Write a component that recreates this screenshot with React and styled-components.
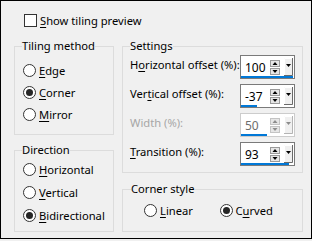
import React from "react";
import styled, { createGlobalStyle } from "styled-components";

const GlobalStyle = createGlobalStyle`
  html, body {
    margin: 0;
    padding: 0;
    background: #f0f0f0;
  }
  body {
    font-family: "Noto Sans", "Open Sans", sans-serif;
    font-size: 11.2px;
  }
`;

const SETTINGS = [
  { label: "Horizontal offset (%):", key: 1, value: 100, min: -100, max: 100 },
  { label: "Vertical offset (%):", key: 3, value: -37, min: -100, max: 100 },
  { label: "Width (%):", key: -1, value: 50, min: 0, max: 100, disabled: true },
  { label: "Transition (%):", key: 0, value: 93, min: 1, max: 100 },
];

export default function App() {
  return (
    <>
      <GlobalStyle />
      <Frame>
        <CheckRow>
          <CheckBox />
          <span>
            <Key>S</Key>how tiling preview
          </span>
        </CheckRow>
        <Columns>
          <Column>
            <Group $pad="5px 0 9px 8px">
              <Legend $ml={-1}>Tiling method</Legend>
              <Radio label="Edge" k={0} h={22} />
              <Radio label="Corner" k={0} h={22} checked />
              <Radio label="Mirror" k={0} h={22} />
            </Group>
            <Group $pad="0 0 4px 8px" $mt={7}>
              <Legend $ml={-1}>Direction</Legend>
              <Radio label="Horizontal" k={0} h={23} />
              <Radio label="Vertical" k={0} h={23} />
              <Radio label="Bidirectional" k={0} h={23} checked />
            </Group>
          </Column>
          <Column $w={181}>
            <Group $pad="1px 7px 6px 7px">
              <Legend>Settings</Legend>
              <Rows>
                {SETTINGS.map((s) => (
                  <SettingRow key={s.label}>
                    <FieldLabel $disabled={s.disabled}>
                      <Label text={s.label} k={s.key} />
                    </FieldLabel>
                    <Spin {...s} />
                  </SettingRow>
                ))}
              </Rows>
            </Group>
            <Group $pad="2px 7px 10px 7px" $mt={8}>
              <Legend $ml={1}>Corner style</Legend>
              <CornerRow>
                <CornerItem>
                  <Radio label="Linear" k={0} h={22} />
                </CornerItem>
                <CornerItem>
                  <Radio label="Curved" k={1} h={22} checked />
                </CornerItem>
              </CornerRow>
            </Group>
          </Column>
        </Columns>
      </Frame>
    </>
  );
}

function Label({ text, k }) {
  if (k < 0) return text;
  return (
    <>
      {text.slice(0, k)}
      <Key>{text[k]}</Key>
      {text.slice(k + 1)}
    </>
  );
}

function Radio({ label, k, h, checked }) {
  return (
    <RadioRow $h={h}>
      <RadioCircle>{checked && <Dot />}</RadioCircle>
      <span>
        <Label text={label} k={k} />
      </span>
    </RadioRow>
  );
}

function Spin({ value, min, max, disabled }) {
  const pct = Math.max(0, Math.min(1, (value - min) / (max - min)));
  const arrow = disabled ? "#8c8c8c" : "#000";
  const edge = disabled ? "#c4c4c4" : "#9a9a9a";
  return (
    <SpinBox $disabled={disabled}>
      <SpinTop>
        <Value $disabled={disabled}>{value}</Value>
        <svg width="10" height="15" viewBox="0 0 10 15">
          <rect x="0.5" y="0.5" width="9" height="6" fill="#e6e6e6" stroke={edge} />
          <polygon points="2.5,5 5,2 7.5,5" fill={arrow} />
          <rect x="0.5" y="8.5" width="9" height="6" fill="#e6e6e6" stroke={edge} />
          <polygon points="2.5,10 7.5,10 5,13" fill={arrow} />
        </svg>
        <svg width="9" height="18" viewBox="0 0 9 18">
          <rect x="0" y="0" width="9" height="18" fill="#f0f0f0" />
          <path d="M0.5 17.5 V0.5 H8" stroke="#fff" fill="none" />
          <path d="M8.5 0 V17.5 H0" stroke={disabled ? "#b4b4b4" : "#6a6a6a"} fill="none" />
          <polygon points="2,6 7,6 4.5,9" fill={arrow} />
        </svg>
      </SpinTop>
      <BarTrack>
        <Bar style={{ width: `${pct * 100}%` }} />
      </BarTrack>
    </SpinBox>
  );
}

const Frame = styled.div`
  box-sizing: border-box;
  width: 312px;
  height: 239px;
  border: 1px solid #000;
  background: #f0f0f0;
  padding: 11px 0 0 13px;
  color: #000;
`;

const CheckRow = styled.div`
  display: flex;
  align-items: center;
  gap: 3px;
  height: 16px;
  margin-left: 10px;
`;

const CheckBox = styled.div`
  box-sizing: border-box;
  width: 13px;
  height: 13px;
  border: 1px solid #333;
  background: #fff;
`;

const Key = styled.u`
  text-decoration: underline;
  text-underline-offset: 2px;
`;

const Columns = styled.div`
  display: flex;
  gap: 8px;
  margin-top: 10px;
`;

const Column = styled.div`
  display: flex;
  flex-direction: column;
  width: ${(p) => p.$w || 100}px;
`;

const Group = styled.fieldset`
  box-sizing: border-box;
  margin: ${(p) => p.$mt || 0}px 0 0;
  padding: ${(p) => p.$pad};
  border: 1px solid #dcdcdc;
  min-width: 0;
`;

const Legend = styled.legend`
  padding: 0;
  margin-left: ${(p) => p.$ml || 0}px;
  height: 16px;
  line-height: 16px;
`;

const RadioRow = styled.div`
  display: flex;
  align-items: center;
  gap: 3px;
  height: ${(p) => p.$h}px;
  white-space: nowrap;
`;

const RadioCircle = styled.div`
  box-sizing: border-box;
  width: 13px;
  height: 13px;
  border: 1px solid #333;
  border-radius: 50%;
  background: #fff;
  display: flex;
  align-items: center;
  justify-content: center;
  flex: none;
`;

const Dot = styled.div`
  width: 7px;
  height: 7px;
  border-radius: 50%;
  background: #262626;
`;

const Rows = styled.div`
  display: flex;
  flex-direction: column;
  gap: 5px;
`;

const SettingRow = styled.div`
  display: flex;
  align-items: center;
  justify-content: space-between;
  height: 24px;
  white-space: nowrap;
`;

const FieldLabel = styled.span`
  color: ${(p) => (p.$disabled ? "#a6a6a6" : "#000")};
  margin-top: -6px;
`;

const SpinBox = styled.div`
  box-sizing: border-box;
  width: 55px;
  height: 24px;
  border: 1px solid ${(p) => (p.$disabled ? "#cccccc" : "#7a7a7a")};
  background: #fff;
  display: flex;
  flex-direction: column;
`;

const SpinTop = styled.div`
  flex: 1;
  display: flex;
  align-items: center;
  gap: 4px;
  padding: 2px 1px 0 4px;
  font-size: 12px;
`;

const Value = styled.span`
  flex: 1;
  color: ${(p) => (p.$disabled ? "#6d6d6d" : "#000")};
`;

const BarTrack = styled.div`
  height: 3px;
  margin-right: 1px;
`;

const Bar = styled.div`
  height: 100%;
  background: #0078d7;
`;

const CornerRow = styled.div`
  display: flex;
  margin-left: 14px;
`;

const CornerItem = styled.div`
  width: 84px;
`;
